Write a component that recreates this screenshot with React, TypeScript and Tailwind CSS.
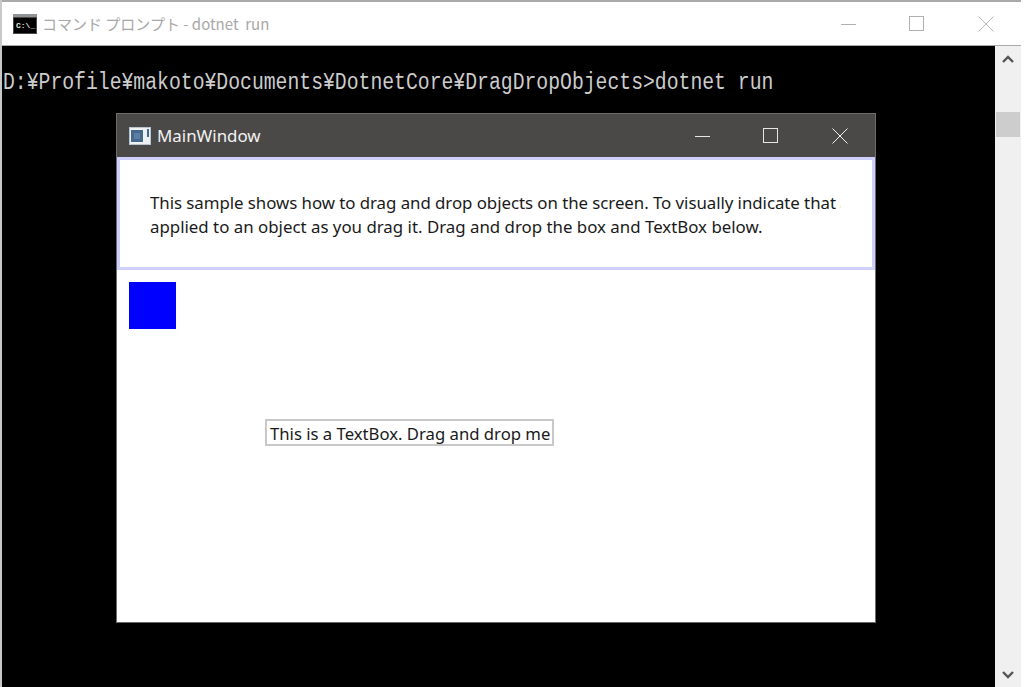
const segoe = "font-['Noto_Sans','Open_Sans',sans-serif]";

function Caption({ color }: { color: string }) {
  return (
    <svg width="16" height="16" viewBox="0 0 16 16" fill="none" stroke={color} strokeWidth="1">
      <path d="M0 8.5h15" />
    </svg>
  );
}

function MaxIcon({ color }: { color: string }) {
  return (
    <svg width="16" height="16" viewBox="0 0 16 16" fill="none" stroke={color} strokeWidth="1">
      <rect x="0.5" y="0.5" width="14" height="14" />
    </svg>
  );
}

function CloseIcon({ color }: { color: string }) {
  return (
    <svg width="16" height="16" viewBox="0 0 16 16" fill="none" stroke={color} strokeWidth="1">
      <path d="M0.5 0.5l15 15M15.5 0.5l-15 15" />
    </svg>
  );
}

function ConsoleIcon() {
  return (
    <svg width="24" height="20" viewBox="0 0 24 20">
      <rect x="0" y="0" width="24" height="20" fill="#4a4a4a" />
      <rect x="0" y="0" width="24" height="3" fill="#8f9396" />
      <rect x="1" y="4" width="22" height="15" fill="#000000" />
      <text x="3" y="14" fontSize="8" fontWeight="700" fill="#e6e6e6" fontFamily="Liberation Mono, monospace">C:\_</text>
    </svg>
  );
}

function AppIcon() {
  return (
    <svg width="22" height="18" viewBox="0 0 22 18">
      <rect x="0" y="0" width="22" height="18" fill="#b9c4cf" />
      <rect x="1" y="1" width="20" height="16" fill="#eef1f4" />
      <rect x="2" y="3" width="12" height="12" fill="#45688c" />
      <rect x="5" y="6" width="6" height="6" fill="#5b7fa3" />
      <rect x="18" y="2" width="2" height="8" fill="#45688c" />
    </svg>
  );
}

function MainWindow() {
  return (
    <div className="absolute left-[116px] top-[113px] w-[760px] h-[510px] flex flex-col bg-white border border-[#6b6b6b]">
      <div className={`h-[43px] shrink-0 bg-[#4b4947] flex items-center pl-[12px] text-[16.9px] ${segoe}`}>
        <AppIcon />
        <span className="ml-[6px] mt-[1px] text-[#f2f2f2]">MainWindow</span>
        <div className="ml-auto flex items-center">
          <div className="w-[68px] flex justify-center"><Caption color="#e6e6e6" /></div>
          <div className="w-[68px] flex justify-center"><MaxIcon color="#e6e6e6" /></div>
          <div className="w-[70px] flex justify-center"><CloseIcon color="#f2f2f2" /></div>
        </div>
      </div>
      <div className="h-[113px] shrink-0 border-[3px] border-[#cfcffb] pl-[30px] pt-[31px] pr-[31px]">
        <div className={`overflow-hidden whitespace-nowrap text-[16.85px] leading-[24px] text-[#1a1a1a] ${segoe}`}>
          <div className="tracking-[-0.05px]">This sample shows how to drag and drop objects on the screen. To visually indicate that a transform is</div>
          <div>applied to an object as you drag it. Drag and drop the box and TextBox below.</div>
        </div>
      </div>
      <div className="relative flex-1">
        <div className="absolute left-[12px] top-[12px] w-[47px] h-[47px] bg-[#0000ff]" />
        <div className={`absolute left-[148px] top-[149px] w-[289px] h-[27px] border-2 border-[#c8c8c8] pl-[3px] text-[16.7px] leading-[25px] text-[#1a1a1a] whitespace-nowrap ${segoe}`}>
          This is a TextBox. Drag and drop me
        </div>
      </div>
    </div>
  );
}

export default function App() {
  return (
    <div className="relative w-[1024px] h-[687px] overflow-hidden bg-white">
      <div className="absolute inset-y-0 left-0 w-[2px] bg-[#c8c8c8]" />
      <div className="ml-[2px] w-[1019px] h-full flex flex-col">
        <div className="h-[46px] shrink-0 bg-white border-t-2 border-b border-[#a9a9a9] flex items-center pl-[11px]">
          <ConsoleIcon />
          <span className="ml-[5px] mt-[1px] text-[15px] text-[#a8a8a8] font-['Noto_Sans_CJK_JP','Noto_Sans',sans-serif]">コマンド プロンプト - dotnet&nbsp; run</span>
          <div className="ml-auto flex items-center">
            <div className="w-[68px] flex justify-center"><Caption color="#b0b0b0" /></div>
            <div className="w-[68px] flex justify-center"><MaxIcon color="#b0b0b0" /></div>
            <div className="w-[70px] flex justify-center"><CloseIcon color="#b8b8b8" /></div>
          </div>
        </div>
        <div className="flex-1 flex min-h-0">
          <div className="flex-1 bg-black pt-[23px] pl-[1px] text-[#cccccc] text-[19.75px] leading-[28px] whitespace-nowrap font-['Liberation_Mono',monospace]">
            <span className="inline-block scale-y-[1.2]">D:¥Profile¥makoto¥Documents¥DotnetCore¥DragDropObjects&gt;dotnet run</span>
          </div>
          <div className="w-[26px] shrink-0 bg-[#f0f0f0] flex flex-col items-center justify-between pt-[9px] pb-[8px]">
            <svg width="12" height="8" viewBox="0 0 12 8" fill="none" stroke="#555555" strokeWidth="2.4"><path d="M1 7l5-5 5 5" /></svg>
            <svg width="12" height="8" viewBox="0 0 12 8" fill="none" stroke="#555555" strokeWidth="2.4"><path d="M1 1l5 5 5-5" /></svg>
          </div>
        </div>
      </div>
      <div className="absolute left-[996px] top-[112px] w-[24px] h-[25px] bg-[#cdcdcd]" />
      <MainWindow />
    </div>
  );
}
